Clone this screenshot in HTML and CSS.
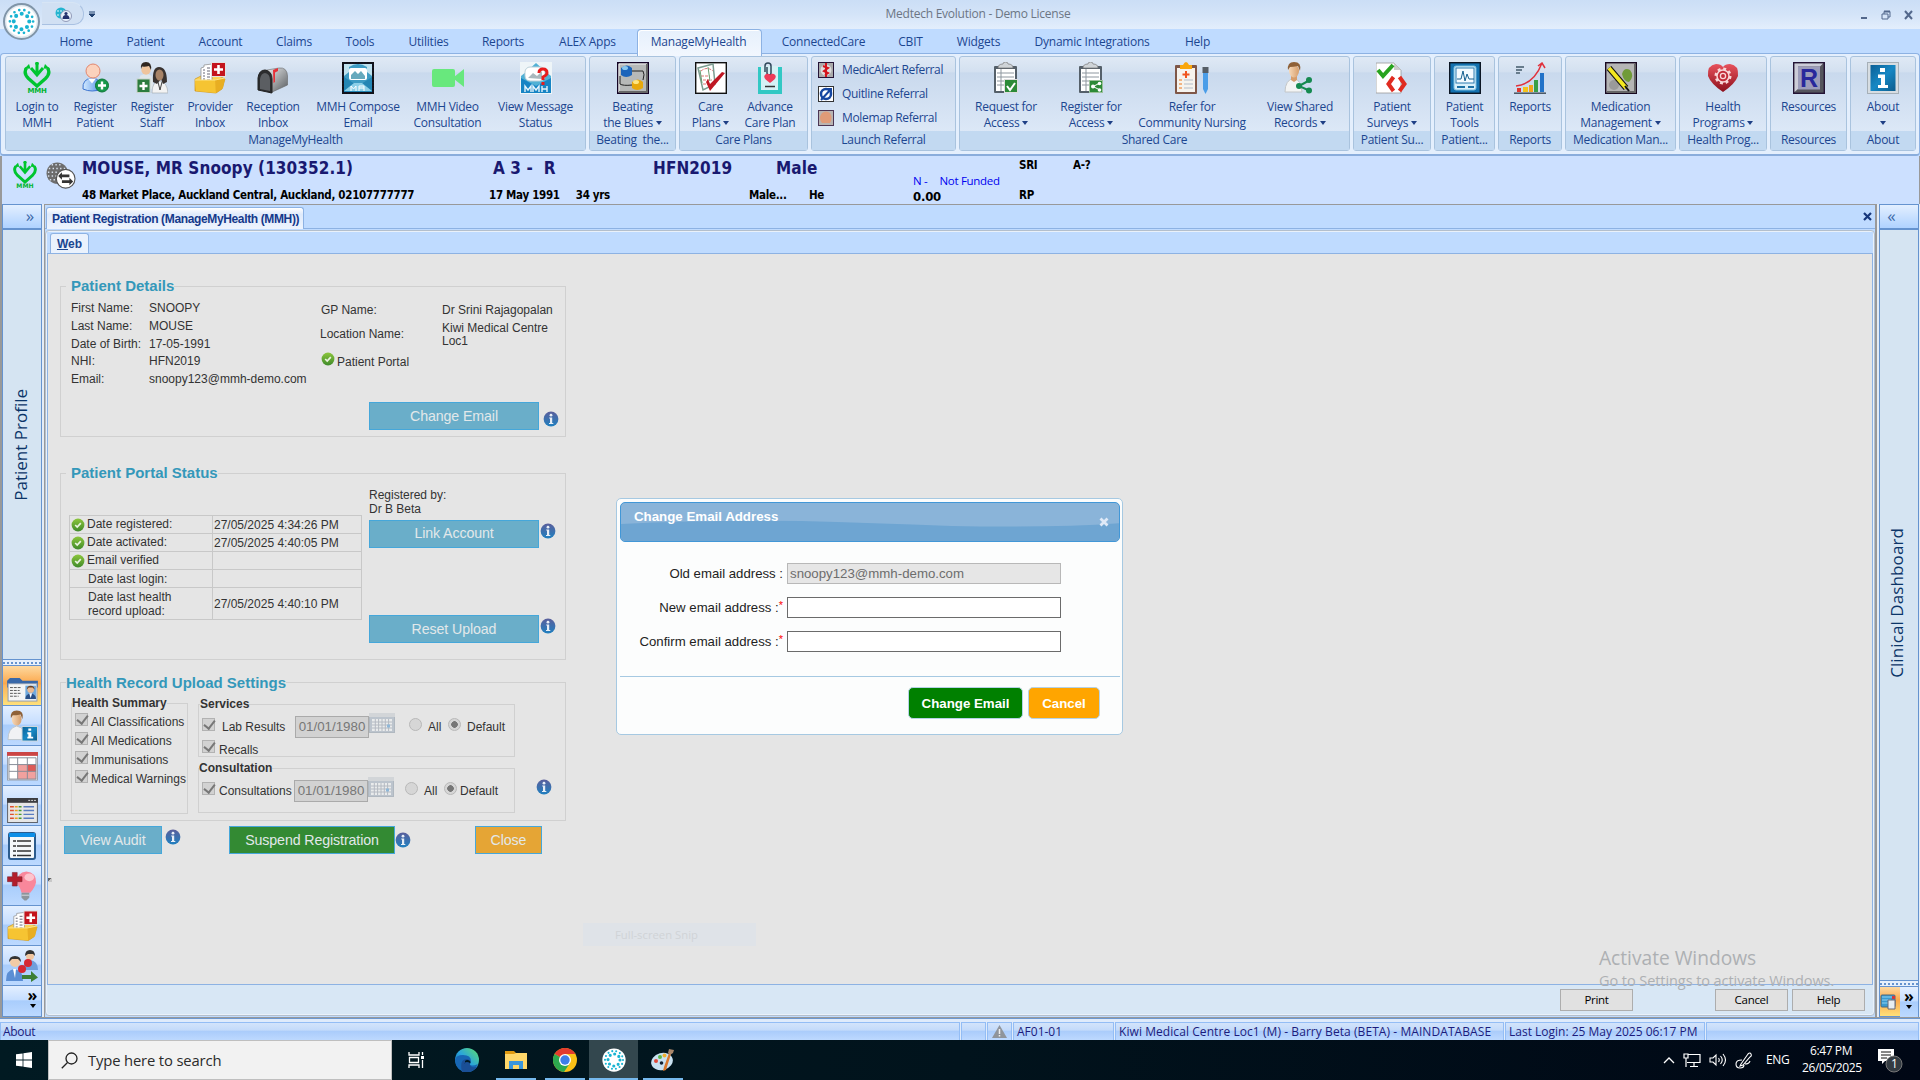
FILE: index.html
```html
<!DOCTYPE html>
<html lang="en">
<head>
<meta charset="utf-8">
<title>Medtech Evolution - Demo License</title>
<link rel="stylesheet" href="styles.css">
</head>
<body>
<svg class="defs" width="0" height="0">
  <defs>
    <linearGradient id="gInfo" x1="0" y1="0" x2="0" y2="1"><stop offset="0" stop-color="#5a5f9c"/><stop offset="1" stop-color="#2080c0"/></linearGradient>
    <linearGradient id="gOk" x1="0" y1="0" x2="0" y2="1"><stop offset="0" stop-color="#8cc63c"/><stop offset="1" stop-color="#3f8a2a"/></linearGradient>
    <linearGradient id="gSkin" x1="0" y1="0" x2="1" y2="0"><stop offset="0" stop-color="#f6d8b8"/><stop offset="1" stop-color="#d79f6c"/></linearGradient>
    <linearGradient id="gBox" x1="0" y1="0" x2="0" y2="1"><stop offset="0" stop-color="#ffd95c"/><stop offset="1" stop-color="#e9a91c"/></linearGradient>
    <linearGradient id="gHeart" x1="0" y1="0" x2="0" y2="1"><stop offset="0" stop-color="#e8525c"/><stop offset="1" stop-color="#8c0f1c"/></linearGradient>
    <linearGradient id="gBlue" x1="0" y1="0" x2="1" y2="1"><stop offset="0" stop-color="#0a5f96"/><stop offset=".5" stop-color="#1788c4"/><stop offset="1" stop-color="#0d5c8c"/></linearGradient>
    <linearGradient id="gUser" x1="0" y1="0" x2="1" y2="0"><stop offset="0" stop-color="#d3eaff"/><stop offset="1" stop-color="#4c8ce8"/></linearGradient>
    <linearGradient id="gMail" x1="0" y1="0" x2="1" y2="1"><stop offset="0" stop-color="#f4f5f6"/><stop offset="1" stop-color="#54585c"/></linearGradient>
    <linearGradient id="gEdge" x1="0" y1="1" x2="1" y2="0"><stop offset="0" stop-color="#0c59a4"/><stop offset=".5" stop-color="#2aa5dc"/><stop offset="1" stop-color="#5fe06c"/></linearGradient>
  </defs>
  <symbol id="info" viewBox="0 0 16 16"><circle cx="8" cy="8" r="7.4" fill="url(#gInfo)"/><circle cx="8" cy="4.2" r="1.4" fill="#e8eef6"/><path d="M6.2 6.5h3V12h1.1v1H6V12h1V7.5h-.8z" fill="#e8eef6"/></symbol>
  <symbol id="ok" viewBox="0 0 14 14"><circle cx="7" cy="7" r="6.4" fill="url(#gOk)"/><path d="M4.2 7l2 2 3.6-3.8" fill="none" stroke="#eaf4e0" stroke-width="1.7"/></symbol>
  <symbol id="mmh" viewBox="0 0 32 32"><path d="M5.500 6Q2 11 7.500 16.500L16 24L24.500 16.500Q30 11 26.500 6" fill="none" stroke="#00c52f" stroke-width="3.300"/><path d="M3 7l5-5 1.500 4.500zM29 7l-5-5-1.500 4.500z" fill="#00c52f"/><path d="M16 1V11M10 6l6 7 6-7" stroke="#00c52f" stroke-width="3" fill="none"/><circle cx="16" cy="1.500" r="1.800" fill="#00c52f"/></symbol>
  <symbol id="medtech" viewBox="0 0 32 32"><circle cx="16" cy="16" r="15.500" fill="#fff"/><g fill="none" stroke="#19b4d2" stroke-linecap="round"><circle cx="16" cy="16" r="12" stroke-width="2.800" stroke-dasharray="0 5.380"/><circle cx="16" cy="16" r="8" stroke-width="4.200" stroke-dasharray="0 6.280"/></g></symbol>
  <symbol id="patient-add" viewBox="0 0 32 32"><path d="M4 27Q3 17 13 16Q23 17 23 27Q13 31 4 27z" fill="url(#gUser)" stroke="#3b74d0"/><path d="M9 16.500l4 5 4-5z" fill="#fff"/><circle cx="14" cy="9" r="7" fill="#fbd2bd" stroke="#e2876e"/><circle cx="23" cy="23.500" r="6.500" fill="#17984a" stroke="#0c7635"/><path d="M23 19.500v8M19 23.500h8" stroke="#fff" stroke-width="2.400"/></symbol>
  <symbol id="staff-add" viewBox="0 0 32 32"><path d="M3 18q0-6 7-6 7 0 7 7v8H3z" fill="#dfe6ea"/><circle cx="10" cy="8" r="4.700" fill="#efc49c"/><path d="M5 7Q4 0 10 0q6 0 5 8l-2-4q-4 1-7 .5z" fill="#2f2620"/><path d="M16 31q0-12 8-12 7 1 8 12z" fill="#f3f3f3" stroke="#9ba5ad" stroke-width=".6"/><path d="M17 20q-1-15 6-15 8 0 8 15l-4 2-2-5-4 5z" fill="#3a3330"/><ellipse cx="23.500" cy="13" rx="4" ry="5.500" fill="#a88468"/><path d="M22 20l2 8 2-8" stroke="#444" fill="none"/><rect x="1" y="17" width="13" height="13.500" fill="#2c7c3e" stroke="#c9d4c9"/><path d="M7.500 20v8M3.500 24h8" stroke="#fff" stroke-width="2.400"/></symbol>
  <symbol id="inbox-red" viewBox="0 0 32 32"><path d="M1 17l6-3h18l6 3-3 10-6 4L1 29z" fill="url(#gBox)" stroke="#cf9414" stroke-width=".7"/><path d="M7 21V6l3-1V3l8-1v19z" fill="#fff" stroke="#888" stroke-width=".7"/><path d="M9 8h2M9 11h2M9 14h2M9 17h2M13 6h3M13 9h3M13 12h3M13 15h3M13 18h3" stroke="#667"/><path d="M1 18h20l1 13L2 29z" fill="#f6c432"/><path d="M21 18l10-2-2 10-7 5z" fill="#e8ae22"/><path d="M1 18h20l10-2" fill="none" stroke="#fbe38c"/><rect x="17.500" y=".5" width="14" height="14" fill="#c4141d" stroke="#e2e2e2"/><path d="M24.500 3v9M20 7.500h9" stroke="#fff" stroke-width="2.600"/></symbol>
  <symbol id="mailbox" viewBox="0 0 32 32"><path d="M7 8.500L22 6q8-1 8.500 8v9L13 31z" fill="url(#gMail)" stroke="#666" stroke-width=".6"/><path d="M1 28V16q1-8 7-8 7 1 7 9v14z" fill="#2b2c2e" stroke="#222"/><path d="M3 27V17q1-6 5-6 5 1 5 7v11z" fill="#5b5e62"/><path d="M16 8l5-2v3l-3 1.500V20l-1.500 1z" fill="#e83038"/></symbol>
  <symbol id="compose" viewBox="0 0 32 32"><rect width="32" height="32" fill="#111327"/><rect x="2" y="2" width="28" height="28" fill="#bfe2ee"/><path d="M2 14l5-4V5q9-6 18 0v5l5 4v10H2z" fill="#3e9cc4"/><rect x="7" y="6" width="18" height="12" rx="2" fill="#fff"/><path d="M9 13l4-4 3 3 3-3 4 5v3H9z" fill="#65a9bd"/><path d="M2 15l14 9 14-9v15H2z" fill="#2486b4"/><path d="M2 29l10-8h8l10 8z" fill="#8dd0e8"/><path d="M9 29v-5l2.500 3 2.500-3v5M17 29v-5h5v5M17 26h5" stroke="#fff" fill="none"/><rect x=".7" y=".7" width="30.600" height="30.600" fill="none" stroke="#111" stroke-width="1.500" stroke-dasharray="2 1"/></symbol>
  <symbol id="video" viewBox="0 0 32 32"><rect y="7" width="23" height="18" rx="2" fill="#68e87d"/><path d="M22 15l10-8v18l-10-8z" fill="#68e87d"/></symbol>
  <symbol id="message" viewBox="0 0 32 32"><rect width="32" height="32" fill="#eef5f8"/><path d="M1 14l5-4 10-9 10 9 5 4v17H1z" fill="#51b1d5"/><rect x="5" y="5" width="20" height="14" rx="5" fill="#fff" stroke="#b9cfd8"/><path d="M8 16l5-5 4 3 5-5v8z" fill="#a9b8bd"/><path d="M1 16l15 8 15-8v15H1z" fill="#1784c4"/><path d="M5 30v-6l3 4 3-4v6M13 30v-6l3 4 3-4v6M22 24v6M27 24v6M22 27h5" stroke="#e4f4fc" stroke-width="1.400" fill="none"/><path d="M19 11q0-4 4-4 4 0 4 4 0 2-4 4v3M23 20v3" stroke="#e81c1c" stroke-width="3" fill="none"/></symbol>
  <symbol id="beating" viewBox="0 0 32 32"><rect x=".7" y=".7" width="30.600" height="30.600" fill="#b7b9b8" stroke="#140425" stroke-width="1.400"/><path d="M2 30V2h28" stroke="#eee" fill="none"/><path d="M2 30h28V2" stroke="#666" fill="none" stroke-width="2"/><path d="M14 9h12q2 3 0 9M3 14v8q3 2 12 1" fill="none" stroke="#222"/><path d="M4 6q6-5 11 0v7q-6 4-11 0z" fill="#1c64ba"/><ellipse cx="8" cy="6" rx="3" ry="2" fill="#88c8f0"/><path d="M15 20q6-5 11 0v6q-6 4-11 0z" fill="#e8a80c"/><ellipse cx="19" cy="20" rx="3" ry="2" fill="#ffe680"/></symbol>
  <symbol id="care" viewBox="0 0 32 32"><rect x=".7" y=".7" width="30.600" height="30.600" fill="#fff" stroke="#111" stroke-width="1.400"/><path d="M3 6l15-4 2 20-12 6z" fill="#fff" stroke="#7b9c90" stroke-width="1.500"/><path d="M6 9q6-5 12 0M6 14h9M8 18h9M8 22h6" stroke="#d77" fill="none" stroke-dasharray="3 1"/><path d="M5 8l2 13M13 5l2 14" stroke="#6a9e72"/><path d="M11 20l4 9 15-18-3-1-12 12-2-5z" fill="#bf1622"/></symbol>
  <symbol id="advance" viewBox="0 0 32 32"><path d="M4 5h24v27H4z" fill="#32c8c4"/><path d="M7 4h17v24H7z" fill="#d5f1f5"/><path d="M11 10V4q0-3 3-3t3 3v7q0 2-2 2t-2-2V5" fill="none" stroke="#30495b" stroke-width="1.500"/><path d="M16 21q-9-6-4-9 3-1 4 1 1-2 4-1 5 3-4 9z" fill="#ee3b58"/><path d="M11 24.500h10" stroke="#333" stroke-width="1.500"/></symbol>
  <symbol id="medicalert" viewBox="0 0 16 16"><rect x=".5" y=".5" width="15" height="15" fill="#aaa" stroke="#241436"/><circle cx="8" cy="8" r="5.500" fill="#ddd"/><path d="M8 1v14M5 4l5 2-4 3 4 2-3 2" stroke="#d4141c" stroke-width="2" fill="none"/></symbol>
  <symbol id="quitline" viewBox="0 0 16 16"><rect x=".5" y=".5" width="15" height="15" fill="#fff" stroke="#333"/><circle cx="8" cy="8" r="5" fill="none" stroke="#1546a0" stroke-width="2.500"/><path d="M3 14L13 3M7 3h6v5" stroke="#1546a0" stroke-width="2" fill="none"/></symbol>
  <symbol id="molemap" viewBox="0 0 16 16"><rect x=".5" y=".5" width="15" height="15" fill="#b9b4b2" stroke="#4c3554"/><path d="M4 3q4-3 8 0 3 5 0 10H4Q0 8 4 3z" fill="#e09b78"/></symbol>
  <symbol id="clip" viewBox="0 0 32 32"><rect x="4" y="4" width="23" height="27" rx="1" fill="#55606a"/><rect x="6" y="7" width="19" height="22" fill="#fff"/><path d="M7 11h17M7 15h17M7 19h17M7 23h17M11 7v22" stroke="#8e979f"/><path d="M8 6q0-4 5-4 0-2 2.500-2T18 2q5 0 5 4z" fill="#cfd4d8" stroke="#777" stroke-width=".7"/></symbol>
  <symbol id="request" viewBox="0 0 32 32"><use href="#clip"/><rect x="14.500" y="17.500" width="13" height="13" fill="#2c8a37" stroke="#ddd"/><path d="M17 24l3 4 5-7" stroke="#fff" stroke-width="2" fill="none"/></symbol>
  <symbol id="share-access" viewBox="0 0 32 32"><use href="#clip"/><rect x="14.500" y="18.500" width="13" height="12" fill="#2c8a37" stroke="#9bc09b"/><path d="M25 21l-7 3.500 7 3.500" stroke="#fff" fill="none"/><circle cx="18" cy="24.500" r="2" fill="#fff"/><circle cx="24.500" cy="21.500" r="1.800" fill="#fff"/><circle cx="24.500" cy="28" r="1.800" fill="#fff"/></symbol>
  <symbol id="nursing" viewBox="0 0 36 32"><rect x="1" y="3" width="22" height="29" rx="1" fill="#7f5748"/><rect x="3" y="6" width="18" height="24" fill="#f6f3ee"/><path d="M6 7V3h3q3-6 6 0h3v4z" fill="#f9a60c"/><path d="M12 9v7M8.500 12.500h7" stroke="#f0541e" stroke-width="2"/><path d="M5 18h3M5 22h3M5 26h3" stroke="#f0a060" stroke-width="1.500"/><path d="M10 18h9M10 22h9M10 26h9" stroke="#c9d0d6" stroke-width="1.500"/><path d="M29 6h5v21l-2.500 5-2.500-5z" fill="#4a9de8"/><path d="M28.500 5h6v6h-6z" fill="#555d66"/></symbol>
  <symbol id="shared" viewBox="0 0 32 32"><path d="M1 30q0-12 9-14 7 2 8 14z" fill="#f3f4f4" stroke="#c3c6c8"/><path d="M7 13h6v5l-3 2-3-2z" fill="#d69d6b"/><ellipse cx="10" cy="9" rx="5" ry="6.500" fill="url(#gSkin)"/><path d="M4 8Q3 0 10 0q8 0 6 9l-2-5q-5 1-8 1z" fill="#8f6138"/><path d="M26 18l-11 6 11 5" fill="none" stroke="#158a50" stroke-width="2"/><circle cx="15" cy="24" r="3" fill="#158a50"/><circle cx="25" cy="18" r="3" fill="#158a50"/><circle cx="25" cy="28.500" r="3" fill="#158a50"/></symbol>
  <symbol id="surveys" viewBox="0 0 32 32"><path d="M0 1h18l7 7v23H0z" fill="#fff" stroke="#999" stroke-width=".8"/><path d="M18 1v7h7z" fill="#ccc"/><path d="M2 8l5 6L17 3" fill="none" stroke="#27a31f" stroke-width="4"/><path d="M17.500 15l-5 7 5 7M23.500 15l5 7-5 7" fill="none" stroke="#e02b20" stroke-width="4"/></symbol>
  <symbol id="tools" viewBox="0 0 32 32"><rect x=".7" y=".7" width="30.600" height="30.600" fill="#1472b0" stroke="#0c1624" stroke-width="1.400"/><rect x="5" y="4" width="22" height="24" rx="2" fill="#d9f0fa" stroke="#76bce0"/><rect x="7" y="6" width="18" height="15" fill="#f4fbff" stroke="#2a7ab0"/><path d="M8 17h4l2-8 2 10 2-7 2 5h5" stroke="#15608f" fill="none"/><path d="M8 25h8M19 25h6" stroke="#1c70a4" stroke-width="2"/></symbol>
  <symbol id="chart" viewBox="0 0 32 32"><path d="M2 5h8M2 8h6M2 11h4" stroke="#677c8c" stroke-width="2"/><path d="M0 31.200h32" stroke="#45525e" stroke-width="1.500"/><rect x="3" y="26" width="4" height="4" fill="#e0362e"/><rect x="9" y="25" width="5" height="5" fill="#f3c41d"/><rect x="15" y="23" width="4" height="7" fill="#f3a41d"/><rect x="20" y="18" width="4" height="12" fill="#38a048"/><rect x="26" y="11" width="4" height="19" fill="#2272c8"/><path d="M2 24Q20 22 28 1M24 4l4-3 3 5" fill="none" stroke="#e0313c" stroke-width="1.500"/></symbol>
  <symbol id="medication" viewBox="0 0 32 32"><rect x=".7" y=".7" width="30.600" height="30.600" fill="#b5b5b5" stroke="#180920" stroke-width="1.400"/><path d="M30 2v28H2" fill="none" stroke="#666" stroke-width="2"/><path d="M17 12q2-7 8-4 5 6-1 12-5 0-7-8z" fill="#709b38"/><circle cx="9" cy="23" r="5" fill="#9a9a9a"/><path d="M4 6l17 20" stroke="#111" stroke-width="6"/><path d="M4 6l17 20" stroke="#f4e820" stroke-width="4"/><path d="M20 24l4 5" stroke="#111" stroke-width="2"/></symbol>
  <symbol id="heart" viewBox="0 0 32 32"><path d="M16 30Q4 22 1 14 0 3 9 2q5 0 7 3 2-3 7-3 9 1 8 12-3 8-15 16z" fill="url(#gHeart)"/><circle cx="16" cy="14" r="7" fill="none" stroke="#f8d7d8" stroke-width="3" stroke-dasharray="2.800 2.698"/><circle cx="16" cy="14" r="6" fill="#c22c38" stroke="#f8d7d8" stroke-width="1.500"/><circle cx="16" cy="14" r="2.600" fill="none" stroke="#f8d7d8" stroke-width="1.300"/></symbol>
  <symbol id="resources" viewBox="0 0 32 32"><rect x=".7" y=".7" width="30.600" height="30.600" fill="#55555d" stroke="#241436" stroke-width="1.400"/><path d="M1.500 30V1.500H30l-3 3H5V27z" fill="#ccccd8"/><rect x="5" y="4.500" width="22" height="23" fill="#9c9cba"/></symbol>
  <symbol id="about" viewBox="0 0 32 32"><rect x=".5" y=".5" width="31" height="31" fill="#d7dde2" stroke="#a6b0b8"/><rect x="3.500" y="3" width="25" height="26" fill="url(#gBlue)"/><path d="M13 6h5v4h-5zM11 12.500h7V23h3v3H11v-3h3v-7h-3z" fill="#fff"/></symbol>
  <symbol id="globe" viewBox="0 0 32 30"><circle cx="12" cy="13" r="11.500" fill="#6d6d6d"/><g fill="none" stroke="#d8e0ec" stroke-width="1.600" stroke-dasharray="1.500 2.500"><path d="M6 4h12M3 8h18M2 12h20M2 16h20M4 20h14"/></g><circle cx="21" cy="19" r="10" fill="#fff" stroke="#555" stroke-width="1.200"/><path d="M13 16l4-4v2.500h8v3h-8V20zM29 22l-4-4v2.500h-8v3h8V26z" fill="#333"/></symbol>
  <symbol id="folder-id" viewBox="0 0 32 26"><path d="M0 4l3-3h10l3 3h16v7H0z" fill="#3867a8"/><rect x="1" y="7" width="30" height="18" fill="#f5f5f5" stroke="#8c9bb0"/><path d="M3 11h12M3 14h10M3 17h12M3 20h9" stroke="#555" stroke-dasharray="3 1"/><rect x="19" y="9" width="11" height="14" fill="#6fa8dc"/><path d="M19 23q0-5 5.500-6 5.500 1 5.500 6z" fill="#294f86"/><path d="M23 17h3l-1.500 5z" fill="#fff"/><circle cx="24.500" cy="13" r="3.500" fill="#eab991"/><path d="M20.500 13q0-4 4-4t4 4l-2-2h-4z" fill="#6a4326"/></symbol>
  <symbol id="person-info" viewBox="0 0 32 32"><path d="M1 30q0-12 9-14 9 2 10 14z" fill="#f1f2f4" stroke="#bfc5ca"/><ellipse cx="10" cy="9" rx="5" ry="6.500" fill="url(#gSkin)"/><path d="M4 8Q3 0 10 0q8 0 6 9l-2-5q-5 1-8 1z" fill="#8f6138"/><rect x="15.500" y="16.500" width="16" height="15" fill="url(#gBlue)" stroke="#cfd8de"/><path d="M22 18.500h3v2.500h-3zM21 22.500h4V27h2v2h-6v-2h1v-2.500h-1z" fill="#fff"/></symbol>
  <symbol id="calendar" viewBox="0 0 32 30"><rect x=".5" y="1" width="31" height="28" fill="#fff" stroke="#98a0ae"/><path d="M0 0h32v4H0z" fill="#cb4545"/><path d="M11 13h19v15H11z" fill="#f1a19e"/><path d="M21 13h9v7h-9z" fill="#dc5a56"/><path d="M2 6h28v22H2zM11 6v22M21 6v22M2 13h28M2 20h28" fill="none" stroke="#858b96"/></symbol>
  <symbol id="table-dark" viewBox="0 0 32 26"><rect x=".5" y=".5" width="31" height="25" fill="#e6e6e6" stroke="#5b5f66"/><path d="M0 0h32v5H0z" fill="#3b3c40"/><path d="M22 2.500h8" stroke="#ddd" stroke-dasharray="2 1"/><path d="M3 9h4M3 13h4M3 17h4M3 21h4" stroke="#e05030" stroke-width="1.500"/><path d="M8 9h3M8 13h3M8 17h3M8 21h3" stroke="#e8a020" stroke-width="1.500"/><path d="M12 9h3M12 13h3M12 17h3M12 21h3" stroke="#4a9a30" stroke-width="1.500"/><path d="M17 9h11M17 13h11M17 17h11M17 21h11" stroke="#5a7cc0" stroke-width="1.500"/></symbol>
  <symbol id="list" viewBox="0 0 28 28"><rect x="1" y="1" width="26" height="26" rx="2" fill="#f5f8fa" stroke="#2b5b8d" stroke-width="2"/><path d="M1 1h26v4H1z" fill="#0d8fe8"/><path d="M5 9h3M5 14h3M5 19h3M5 23.500h3M9 9h14M9 14h14M9 19h14M9 23.500h14" stroke="#333" stroke-width="1.600"/></symbol>
  <symbol id="bulb" viewBox="0 0 32 32"><path d="M15 23q-1-5-5-10 0-11 10-12 10 1 10 11-1 5-6 11z" fill="#f9879b"/><ellipse cx="23" cy="7" rx="5" ry="4" fill="#fdc4cd"/><path d="M15 23h8v5l-3 3h-2l-3-3z" fill="#8d959c"/><path d="M15 25.500h8" stroke="#d5dade"/><path d="M5.500 2h5v4.500h5v5h-5V16h-5v-4.500H.5v-5h5z" fill="#b21d2c" stroke="#7b2430" stroke-width=".6"/></symbol>
  <symbol id="swap-people" viewBox="0 0 34 32"><path d="M18 20q0-9 7-10 8 1 8 10z" fill="#6f9fdc"/><circle cx="25" cy="6" r="4" fill="#f0c6a0"/><path d="M20 6q0-6 5-6t5 6l-2-2h-5z" fill="#333"/><path d="M1 31Q1 20 9 19q9 1 9 12z" fill="#5b8ed4"/><path d="M8 19h3l-1 9z" fill="#fff"/><circle cx="10" cy="12" r="5" fill="#f3cba6"/><path d="M4 12q0-6 6-6t6 6l-3-3H7z" fill="#333"/><circle cx="23" cy="13" r="4" fill="#d62832"/><circle cx="17" cy="19" r="4" fill="#d62832"/><path d="M17 25h9v-4l7 6.500-7 4.500v-3h-9z" fill="#3d7f35"/></symbol>
  <symbol id="dash" viewBox="0 0 18 18"><rect x="1" y="2" width="14" height="12" rx="1" fill="#3a9ad0" stroke="#4a6880"/><path d="M2 4h10M2 7h9M2 10h7" stroke="#8fd0f0"/><path d="M8 7h7v9H8z" fill="#e8eef2" stroke="#667"/><rect x="12" y="3" width="3" height="3" fill="#d83838"/></symbol>
  <symbol id="cal-small" viewBox="0 0 26 20"><rect x=".5" y="1" width="25" height="18.500" fill="#bcc4cd" stroke="#b0b8c0"/><path d="M0 0h26v4H0z" fill="#d2d5d8"/><path d="M3 6h20v12H3z" fill="#e9ebec"/><path d="M3 9h20M3 12h20M3 15h20M6.300 6v12M9.600 6v12M13 6v12M16.300 6v12M19.600 6v12" stroke="#b4bac2"/><rect x="18" y="11.500" width="3" height="3" fill="#8fb7d8"/></symbol>
</svg>

<header class="titlebar">
  <div class="quick"><svg width="17" height="15" viewBox="0 0 17 15"><circle cx="6" cy="6" r="5.500" fill="#24b4d0"/><path d="M2 4h8M2 8h8" stroke="#e0f6fa" stroke-dasharray="2 1"/><circle cx="11" cy="9" r="5.500" fill="#e8f0fa" stroke="#7d86a8" stroke-width=".8"/><path d="M7.500 12q0-4 3.500-4t3.500 4z" fill="#23306c"/><circle cx="11" cy="6.500" r="1.600" fill="#23306c"/></svg></div>
  <svg class="quick-arrow" width="6" height="7" viewBox="0 0 6 7"><path d="M0 1h6M0 3l3 3 3-3z" stroke="#20406e" fill="#20406e"/></svg>
  <div class="window-title">Medtech Evolution - Demo License</div>
  <div class="window-buttons">
    <svg width="8" height="10" viewBox="0 0 8 10"><path d="M1 8h6" stroke="#53688c" stroke-width="2"/></svg>
    <svg width="10" height="10" viewBox="0 0 10 10"><path d="M1 4h6v5H1zM3 4V1.500h6V7H7" fill="none" stroke="#53688c"/><path d="M3 1.500h6" stroke="#53688c" stroke-width="2"/></svg>
    <svg width="9" height="10" viewBox="0 0 9 10"><path d="M1 1l7 8M8 1L1 9" stroke="#53688c" stroke-width="2"/></svg>
  </div>
  <div class="orb"><svg width="32" height="32"><use href="#medtech"/></svg></div>
</header>

<nav class="tabs">
  <span>Home</span><span>Patient</span><span>Account</span><span>Claims</span><span>Tools</span><span>Utilities</span><span>Reports</span><span class="alex">ALEX Apps</span><span class="active">ManageMyHealth</span><span>ConnectedCare</span><span>CBIT</span><span>Widgets</span><span>Dynamic Integrations</span><span>Help</span>
</nav>

<section class="ribbon">
  <div class="group">
    <div class="tools tools-mmh">
      <div class="tool"><svg viewBox="0 0 32 32"><use href="#mmh"/><text x="16" y="31" text-anchor="middle" class="mmh-text">MMH</text></svg><p>Login to<br>MMH</p></div>
      <div class="tool"><svg><use href="#patient-add"/></svg><p>Register<br>Patient</p></div>
      <div class="tool"><svg><use href="#staff-add"/></svg><p>Register<br>Staff</p></div>
      <div class="tool"><svg><use href="#inbox-red"/></svg><p>Provider<br>Inbox</p></div>
      <div class="tool"><svg><use href="#mailbox"/></svg><p>Reception<br>Inbox</p></div>
      <div class="tool"><svg><use href="#compose"/></svg><p>MMH Compose<br>Email</p></div>
      <div class="tool"><svg><use href="#video"/></svg><p>MMH Video<br>Consultation</p></div>
      <div class="tool"><svg><use href="#message"/></svg><p>View Message<br>Status</p></div>
    </div>
    <div class="caption">ManageMyHealth</div>
  </div>
  <div class="group">
    <div class="tools"><div class="tool"><svg><use href="#beating"/></svg><p>Beating<br>the Blues <i></i></p></div></div>
    <div class="caption">Beating&nbsp; the...</div>
  </div>
  <div class="group">
    <div class="tools tools-care">
      <div class="tool"><svg><use href="#care"/></svg><p>Care<br>Plans <i></i></p></div>
      <div class="tool"><svg><use href="#advance"/></svg><p>Advance<br>Care Plan</p></div>
    </div>
    <div class="caption">Care Plans</div>
  </div>
  <div class="group">
    <div class="links">
      <div><svg><use href="#medicalert"/></svg>MedicAlert Referral</div>
      <div><svg><use href="#quitline"/></svg>Quitline Referral</div>
      <div><svg><use href="#molemap"/></svg>Molemap Referral</div>
    </div>
    <div class="caption">Launch Referral</div>
  </div>
  <div class="group">
    <div class="tools tools-shared">
      <div class="tool"><svg><use href="#request"/></svg><p>Request for<br>Access <i></i></p></div>
      <div class="tool"><svg><use href="#share-access"/></svg><p>Register for<br>Access <i></i></p></div>
      <div class="tool"><svg class="wide"><use href="#nursing"/></svg><p>Refer for<br>Community Nursing</p></div>
      <div class="tool"><svg><use href="#shared"/></svg><p>View Shared<br>Records <i></i></p></div>
    </div>
    <div class="caption">Shared Care</div>
  </div>
  <div class="group"><div class="tools"><div class="tool"><svg><use href="#surveys"/></svg><p>Patient<br>Surveys <i></i></p></div></div><div class="caption">Patient Su...</div></div>
  <div class="group"><div class="tools"><div class="tool"><svg><use href="#tools"/></svg><p>Patient<br>Tools</p></div></div><div class="caption">Patient...</div></div>
  <div class="group"><div class="tools"><div class="tool"><svg><use href="#chart"/></svg><p>Reports</p></div></div><div class="caption">Reports</div></div>
  <div class="group"><div class="tools"><div class="tool"><svg><use href="#medication"/></svg><p>Medication<br>Management <i></i></p></div></div><div class="caption">Medication Man...</div></div>
  <div class="group"><div class="tools"><div class="tool"><svg><use href="#heart"/></svg><p>Health<br>Programs <i></i></p></div></div><div class="caption">Health Prog...</div></div>
  <div class="group"><div class="tools"><div class="tool"><svg viewBox="0 0 32 32"><use href="#resources"/><text x="16" y="25" text-anchor="middle" class="r-text">R</text></svg><p>Resources</p></div></div><div class="caption">Resources</div></div>
  <div class="group"><div class="tools"><div class="tool"><svg><use href="#about"/></svg><p>About<br><i></i></p></div></div><div class="caption">About</div></div>
</section>

<section class="banner">
  <svg class="banner-mmh" viewBox="0 0 32 32"><use href="#mmh"/><text x="16" y="31" text-anchor="middle" class="mmh-text">MMH</text></svg>
  <svg class="banner-globe"><use href="#globe"/></svg>
  <div class="b-name"><strong>MOUSE, MR Snoopy (130352.1)</strong><b>48 Market Place, Auckland Central, Auckland, 02107777777</b></div>
  <div class="b-code"><strong>A 3 - &nbsp;R</strong><b>17 May 1991<span>34 yrs</span></b></div>
  <div class="b-nhi"><strong>HFN2019</strong><b>Male...</b></div>
  <div class="b-sex"><strong>Male</strong><b>He</b></div>
  <div class="b-fund"><em>N -<span>Not Funded</span></em><b>0.00</b></div>
  <div class="b-sri"><b>SRI</b><b>RP</b></div>
  <div class="b-alert"><b>A-?</b></div>
</section>

<main class="workspace">
  <aside class="dock dock-left">
    <div class="dock-head">»</div>
    <div class="dock-body"><span>Patient Profile</span></div>
    <div class="grip"></div>
    <div class="dock-item selected"><svg width="31" height="25"><use href="#folder-id"/></svg></div>
    <div class="dock-item"><svg width="31" height="32"><use href="#person-info"/></svg></div>
    <div class="dock-item"><svg width="31" height="29"><use href="#calendar"/></svg></div>
    <div class="dock-item low"><svg width="31" height="25"><use href="#table-dark"/></svg></div>
    <div class="dock-item"><svg width="28" height="28"><use href="#list"/></svg></div>
    <div class="dock-item"><svg width="31" height="32"><use href="#bulb"/></svg></div>
    <div class="dock-item"><svg width="31" height="32"><use href="#inbox-red"/></svg></div>
    <div class="dock-item"><svg width="34" height="32"><use href="#swap-people"/></svg></div>
    <div class="dock-more"><span>»</span><i></i></div>
  </aside>

  <section class="document">
    <div class="doc-tabs"><div class="doc-tab">Patient Registration (ManageMyHealth (MMH))</div><svg class="doc-close" width="9" height="9" viewBox="0 0 9 9"><path d="M1 1l7 7M8 1L1 8" stroke="#17377c" stroke-width="2.200"/></svg></div>
    <div class="frame">
      <div class="sub-tabs"><div class="sub-tab"><u>W</u>eb</div></div>
      <div class="content">
        <fieldset class="box details">
          <legend>Patient Details</legend>
          <div class="details-top">
            <dl class="person">
              <dt>First Name:</dt><dd>SNOOPY</dd>
              <dt>Last Name:</dt><dd>MOUSE</dd>
              <dt>Date of Birth:</dt><dd>17-05-1991</dd>
              <dt>NHI:</dt><dd>HFN2019</dd>
              <dt>Email:</dt><dd>snoopy123@mmh-demo.com</dd>
            </dl>
            <dl class="clinic">
              <dt>GP Name:</dt><dd>Dr Srini Rajagopalan</dd>
              <dt class="loc">Location Name:</dt><dd class="loc-value">Kiwi Medical Centre Loc1</dd>
              <dt class="portal"><svg class="ok"><use href="#ok"/></svg>Patient Portal</dt>
            </dl>
          </div>
          <div class="details-action"><button class="btn blue">Change Email</button><svg class="info"><use href="#info"/></svg></div>
        </fieldset>

        <fieldset class="box status">
          <legend>Patient Portal Status</legend>
          <div class="status-row">
            <table>
              <tr><td><svg class="ok"><use href="#ok"/></svg>Date registered:</td><td>27/05/2025 4:34:26 PM</td></tr>
              <tr><td><svg class="ok"><use href="#ok"/></svg>Date activated:</td><td>27/05/2025 4:40:05 PM</td></tr>
              <tr><td><svg class="ok"><use href="#ok"/></svg>Email verified</td><td></td></tr>
              <tr><td class="plain">Date last login:</td><td></td></tr>
              <tr class="tall"><td class="plain">Date last health<br>record upload:</td><td>27/05/2025 4:40:10 PM</td></tr>
            </table>
            <div class="status-side">
              <p>Registered by:<br>Dr B Beta</p>
              <div class="side-action link"><button class="btn blue">Link Account</button><svg class="info"><use href="#info"/></svg></div>
              <div class="side-action reset"><button class="btn blue">Reset Upload</button><svg class="info"><use href="#info"/></svg></div>
            </div>
          </div>
        </fieldset>

        <fieldset class="box upload">
          <legend>Health Record Upload Settings</legend>
          <div class="upload-row">
            <fieldset class="inner summary">
              <legend>Health Summary</legend>
              <label><i class="check"></i>All Classifications</label>
              <label><i class="check"></i>All Medications</label>
              <label><i class="check"></i>Immunisations</label>
              <label><i class="check"></i>Medical Warnings</label>
            </fieldset>
            <div class="upload-mid">
              <fieldset class="inner services">
                <legend>Services</legend>
                <div class="opt lab"><i class="check"></i><span class="opt-name">Lab Results</span><span class="date">01/01/1980</span><svg class="cal"><use href="#cal-small"/></svg><i class="radio"></i><span class="opt-all">All</span><i class="radio on"></i><span class="opt-default">Default</span></div>
                <div class="opt recalls"><i class="check"></i><span class="opt-name">Recalls</span></div>
              </fieldset>
              <fieldset class="inner consult">
                <legend>Consultation</legend>
                <div class="opt"><i class="check"></i><span class="opt-name">Consultations</span><span class="date">01/01/1980</span><svg class="cal"><use href="#cal-small"/></svg><i class="radio"></i><span class="opt-all">All</span><i class="radio on"></i><span class="opt-default">Default</span></div>
              </fieldset>
            </div>
            <svg class="info"><use href="#info"/></svg>
          </div>
        </fieldset>

        <div class="actions">
          <button class="btn blue audit">View Audit</button><svg class="info"><use href="#info"/></svg>
          <button class="btn green suspend">Suspend Registration</button><svg class="info low"><use href="#info"/></svg>
          <button class="btn orange close">Close</button>
        </div>
        <i class="mark"></i>
        <div class="snip">Full-screen Snip</div>
      </div>
      <footer class="doc-footer"><button>Print</button><button class="cancel">Cancel</button><button>Help</button></footer>
    </div>
  </section>

  <aside class="dock dock-right">
    <div class="dock-head">«</div>
    <div class="dock-body"><span>Clinical Dashboard</span></div>
    <div class="grip"></div>
    <div class="dock-bottom"><div class="dock-mini"><svg width="18" height="18"><use href="#dash"/></svg></div><div class="dock-more"><span>»</span><i></i></div></div>
  </aside>
</main>

<section class="dialog">
  <header><svg class="wave" viewBox="0 0 498 38" preserveAspectRatio="none"><path d="M0 21Q80 17 180 18 250 20 330 23 430 25 499 20V38H0z"/></svg><h2>Change Email Address</h2><svg class="dialog-close" width="10" height="10" viewBox="0 0 10 10"><path d="M1.500 1.500l7 7M8.500 1.500l-7 7" stroke="#dfe9f7" stroke-width="2.800"/></svg></header>
  <div class="form">
    <span>Old email address :</span><div class="field disabled">snoopy123@mmh-demo.com</div>
    <span>New email address :<sup>*</sup></span><div class="field"></div>
    <span>Confirm email address :<sup>*</sup></span><div class="field"></div>
  </div>
  <footer><button class="ok-btn">Change Email</button><button class="cancel-btn">Cancel</button></footer>
</section>

<div class="watermark"><p>Activate Windows</p><small>Go to Settings to activate Windows.</small></div>

<section class="statusbar">
  <div>About</div><div></div><div class="warn"><svg width="15" height="13" viewBox="0 0 15 13"><path d="M7.500 0L15 13H0z" fill="#8f949b"/><path d="M7.500 4v5M7.500 10v1.500" stroke="#eee" stroke-width="1.500"/></svg></div><div>AF01-01</div><div class="site">Kiwi Medical Centre Loc1 (M) - Barry Beta (BETA) - MAINDATABASE</div><div>Last Login: 25 May 2025 06:17 PM</div><div></div>
</section>

<footer class="taskbar">
  <div class="start"><svg width="16" height="16" viewBox="0 0 16 16"><path d="M0 2.300L6.600 1.400V7.600H0zM7.400 1.300L16 0v7.600H7.400zM0 8.400h6.600v6.200L0 13.700zM7.400 8.400H16V16l-8.600-1.300z" fill="#fff"/></svg></div>
  <div class="search"><svg width="17" height="17" viewBox="0 0 17 17"><circle cx="10.500" cy="6.500" r="5.500" fill="none" stroke="#222" stroke-width="1.300"/><path d="M6.500 10.500L.8 16.200" stroke="#222" stroke-width="1.300"/></svg>Type here to search</div>
  <div class="app view"><svg width="17" height="16" viewBox="0 0 17 16"><path d="M1 0v3h10V0M1 16v-3h10v3M1.500 5.500h9v5h-9zM14.500 0v3M14.500 8v8" fill="none" stroke="#fff" stroke-width="1.300"/><path d="M13 4h3v3h-3z" fill="#fff"/></svg></div>
  <div class="app"><svg width="24" height="24" viewBox="0 0 24 24"><circle cx="12" cy="12" r="12" fill="url(#gEdge)"/><path d="M0 12Q1 7 8 7q8 0 8 6 0 2-2 3 2 3 9 0-4 8-11 8Q1 23 0 12z" fill="#1766b4"/><path d="M7 24q-3-13 5-13 4 1 3 4-1 2 2 4 3 1 6-1-6 8-16 6z" fill="#1a4f96"/><path d="M10 13q2-2 5 0 1 1 0 3 0-2-3-2t-2 2z" fill="#011a22"/></svg></div>
  <div class="app open"><svg width="22" height="20" viewBox="0 0 22 20"><path d="M0 1h9l2 2h11v16H0z" fill="#e09a10"/><path d="M0 4h9l2-1h11v16H0z" fill="#ffd769"/><path d="M4 19v-8h14v8h-4v-4H8v4z" fill="#3b96dc"/></svg></div>
  <div class="app open"><svg width="24" height="24" viewBox="0 0 24 24"><circle cx="12" cy="12" r="12" fill="#fbc116"/><path d="M12 12L1.600 6A12 12 0 0 1 22.400 6H12z" fill="#e33b2e"/><path d="M12 12L1.600 6A12 12 0 0 0 11 24l6-9z" fill="#2da94f"/><circle cx="12" cy="12" r="6" fill="#fff"/><circle cx="12" cy="12" r="4.700" fill="#3f7ee8"/></svg></div>
  <div class="app open current"><svg width="24" height="24"><use href="#medtech"/></svg></div>
  <div class="app open"><svg width="24" height="24" viewBox="0 0 24 24"><ellipse cx="11" cy="13.500" rx="11" ry="8.500" transform="rotate(-15 11 13.500)" fill="#c9e2f2"/><circle cx="5" cy="13" r="2" fill="#e04a3a"/><circle cx="9" cy="9" r="2" fill="#5cb848"/><circle cx="13.500" cy="7.500" r="2" fill="#f0b030"/><circle cx="10.500" cy="15" r="1.800" fill="#123"/><path d="M18 5l2 1-5 16-3 1 1-4z" fill="#d9782c"/><path d="M18 1l5 1-1 3-3 2-2-2z" fill="#a9876b"/></svg></div>
  <div class="tray">
    <svg width="12" height="8" viewBox="0 0 12 8"><path d="M1 7l5-5 5 5" fill="none" stroke="#fff" stroke-width="1.300"/></svg>
    <svg width="18" height="15" viewBox="0 0 18 15"><path d="M5 1.500h12v8H4M11 9.500v4M7 13.500h8M1 1h4v4H1zM3 5v9" fill="none" stroke="#fff" stroke-width="1.200"/></svg>
    <svg width="18" height="14" viewBox="0 0 18 14"><path d="M1 5h3l3-3v10L4 9H1zM9.500 5q1.500 2 0 4M11.500 3q3.500 4 0 8M14 1q5 6 0 12" fill="none" stroke="#fff" stroke-width="1.100"/></svg>
    <svg width="18" height="17" viewBox="0 0 18 17"><path d="M6 12L13 2q2-2 3 0t-1 3L8 13l-3 1zM7 8q-6 0-6 4t4 4 4-3M10 12q4 0 5-3" fill="none" stroke="#fff" stroke-width="1.100"/></svg>
    <span class="lang">ENG</span>
    <div class="clock"><span>6:47 PM</span><span>26/05/2025</span></div>
    <div class="notice"><svg width="25" height="25" viewBox="0 0 25 25"><path d="M0 1h16v12H7l-3 3v-3H0z" fill="#fff"/><path d="M3 4h10M3 7h10M3 10h6" stroke="#111"/><circle cx="16" cy="16" r="8" fill="#333b42" stroke="#777"/></svg><b>1</b></div>
  </div>
</footer>
</body>
</html>
```
FILE: styles.css
```css
* { box-sizing: border-box; }
body { margin: 0; width: 1920px; height: 1080px; overflow: hidden; position: relative; display: flex; flex-direction: column; font: 12px/16px "Open Sans", "Noto Sans", sans-serif; color: #1c4690; background: #bfdbff; }
p, dl, dd, h2 { margin: 0; }
svg { display: block; flex: none; }
.defs { position: absolute; }
button { font: inherit; padding: 0; margin: 0; display: block; flex: none; }
.mmh-text { font: bold 7px "DejaVu Sans", sans-serif; fill: #00b52f; }
.r-text { font: bold 25px "Liberation Sans", sans-serif; fill: #28289c; }

/* title bar */
.titlebar { height: 29px; flex: none; display: flex; align-items: center; position: relative; background: linear-gradient(#cbdef6, #d4e4f8 50%, #e3eefc); }
.quick { width: 42px; height: 23px; margin: -3px 0 0 42px; padding: 4px 0 0 13px; border: 1px solid #a9c1e2; border-top-color: #d7e5f5; border-left: 0; border-radius: 0 12px 10px 0; background: #d1e0f3; }
.quick-arrow { margin-left: 5px; }
.window-title { position: absolute; left: 0; top: 6px; width: 1956px; text-align: center; color: #6c7684; letter-spacing: -.25px; }
.window-buttons { margin-left: auto; display: flex; gap: 13px; padding-right: 7px; }
.orb { position: absolute; left: 3px; top: 3px; width: 37px; height: 37px; border-radius: 50%; border: 2px solid #8095a8; background: #e2ebf1; padding: 1px; z-index: 3; }
.orb svg { width: 31px; height: 31px; }

/* ribbon tabs */
.tabs { height: 24px; flex: none; display: grid; grid-template-columns: 70px 69px 81px 66px 66px 71px 78px 95px 125px 123px 51px 85px 142px 69px; padding-left: 41px; background: #bfdbff; line-height: 25px; text-align: center; letter-spacing: -.2px; }
.tabs .alex { padding-right: 4px; }
.tabs .active { margin: 0 0 -2px 0; border: 1px solid #8db2e3; border-bottom: 0; border-radius: 4px 4px 0 0; background: linear-gradient(#e6f0fc, #f2f7fe); line-height: 24px; z-index: 2; box-shadow: inset 1px 1px #fff; padding-right: 2px; }

/* ribbon */
.ribbon { height: 103px; flex: none; display: grid; grid-template-columns: 581px 87px 129px 145px 391px 78px 61px 64px 111px 88px 77px 66px; gap: 3px; padding: 2px 0 4px 4px; background: #e4effd; border: 1px solid #8db2e3; border-bottom: 2px solid #8aaddc; border-radius: 4px; }
.group { border: 1px solid #a9c3de; border-radius: 3px; display: flex; flex-direction: column; background: linear-gradient(#dfe9f5, #d3e0f0 16%, #c9d9ed 17%, #dce8f7 80%); letter-spacing: -.27px; min-width: 0; }
.caption { height: 19px; margin-top: auto; background: #c2d9f1; text-align: center; line-height: 18px; white-space: nowrap; }
.tools { display: grid; grid-template-columns: 1fr; padding-top: 5px; }
.tools-mmh { grid-template-columns: 58px 58px 56px 60px 66px 104px 75px 101px; padding-left: 2px; }
.tools-care { grid-template-columns: 57px 62px; padding-left: 2px; }
.tools-shared { grid-template-columns: 86px 84px 118px 98px; padding-left: 3px; }
.tool { display: flex; flex-direction: column; align-items: center; min-width: 0; }
.tool svg { width: 32px; height: 32px; }
.tool svg.wide { width: 36px; }
.tool p { margin-top: 5px; text-align: center; white-space: nowrap; line-height: 16px; }
.tool i, .dock-more i { display: inline-block; width: 0; height: 0; border: 3px solid transparent; border-top: 4px solid #1e3f85; border-bottom: 0; vertical-align: 2px; }
.links { padding: 1px 0 0 6px; letter-spacing: -.35px; }
.links div { height: 24px; display: flex; align-items: center; gap: 8px; }
.links svg { width: 16px; height: 16px; }

/* patient banner */
.banner { height: 48px; flex: none; display: flex; background: #cce0ff; border-left: 2px solid #999; border-right: 1px solid #999; color: #000; white-space: nowrap; font-family: "DejaVu Sans Condensed", "DejaVu Sans", sans-serif; }
.banner > div { display: flex; flex-direction: column; }
.banner strong { font-size: 17px; line-height: 24px; color: #191970; letter-spacing: .08px; }
.banner b { font-size: 11.500px; line-height: 14px; margin-top: 8px; letter-spacing: -.3px; }
.banner-mmh { width: 28px; height: 30px; margin: 4px 0 0 9px; }
.banner-globe { width: 30px; height: 28px; margin: 5px 0 0 7px; }
.b-name { margin-left: 6px; width: 411px; }
.b-code { width: 160px; }
.b-code b { margin-left: -4px; }
.b-code span { margin-left: 16px; }
.b-nhi { width: 123px; }
.b-nhi b { margin-left: 96px; }
.b-sex { width: 137px; }
.b-sex b { margin-left: 33px; }
.b-fund { width: 106px; padding-top: 17px; }
.b-fund em { font: 11.500px/15px "Open Sans", sans-serif; letter-spacing: -.3px; color: #0000f0; }
.b-fund em span { margin-left: 12px; }
.b-fund b { margin-top: 2px; font-size: 13px; letter-spacing: -.2px; }
.b-sri { width: 54px; padding-top: 2px; }
.b-sri b, .b-alert b { margin: 0; }
.b-sri b + b { margin-top: 16px; }
.b-alert { padding-top: 2px; }

/* workspace */
.workspace { height: 814px; flex: none; display: flex; border-left: 2px solid #999; background: #e4ecf6; border-bottom: 1px solid #999; }
.dock { flex: none; display: flex; flex-direction: column; border: 1px solid #6593cf; background: #d5e4f2; }
.dock-left { width: 40px; margin: 0 2px 0 0; }
.dock-head { height: 25px; flex: none; border-bottom: 2px solid #6593cf; background: linear-gradient(#e3efff, #afd2ff); color: #3d69a8; font-size: 17px; line-height: 21px; text-align: center; }
.dock-left .dock-head { padding-left: 16px; }
.dock-right .dock-head { padding-right: 15px; }
.dock-body { flex: 1; display: flex; justify-content: center; align-items: center; color: #0b3468; font: 17px/20px "Open Sans", sans-serif; }
.dock-body span { writing-mode: vertical-rl; transform: rotate(180deg); }
.dock-left .dock-body { padding-right: 2px; }
.dock-right .dock-body { align-items: flex-start; padding-top: 298px; padding-right: 5px; letter-spacing: .1px; }
.grip { height: 7px; flex: none; border: solid #6593cf; border-width: 1px 0; background: repeating-linear-gradient(90deg, #6593cf 0 2px, #e6f0fc 2px 4px) center / 100% 2px no-repeat #e6f0fc; }
.dock-item { height: 40px; flex: none; display: flex; align-items: center; justify-content: center; border-bottom: 1px solid #6593cf; background: linear-gradient(#e3efff, #c6deff 45%, #a9cdfc 50%, #bcd9ff); padding-top: 1px; }
.dock-item.selected { background: linear-gradient(#fdd9a0, #fca84c 45%, #fbb45c 50%, #fee07a); padding-top: 8px; }
.dock-item.low { padding-top: 10px; }
.dock-more { height: 30px; flex: none; display: flex; flex-direction: column; align-items: center; padding: 2px 0 0 21px; background: linear-gradient(#e3efff, #c6deff 45%, #a9cdfc 50%, #bcd9ff); color: #000; font: bold 16px/14px "Open Sans", sans-serif; }
.dock-more i { border-top-color: #000; margin-top: 2px; }
.dock-right { width: 40px; margin: 0 1px 0 auto; }
.dock-right .grip { margin-top: auto; }
.dock-bottom { display: flex; height: 29px; flex: none; }
.dock-mini { width: 20px; background: linear-gradient(#fdd9a0, #fca84c 45%, #fee07a); display: flex; align-items: center; }
.dock-bottom .dock-more { width: 18px; padding-left: 0; }

.document { width: 1833px; flex: none; display: flex; flex-direction: column; border: solid #999; border-width: 1px 2px 0 1px; background: #bfdbff; }
.doc-tabs { height: 24px; flex: none; display: flex; justify-content: space-between; padding: 2px 3px 0 1px; border-bottom: 1px solid #8db2e3; }
.doc-tab { width: 258px; height: 22px; border: 1px solid #8db2e3; border-bottom: 0; border-radius: 3px 3px 0 0; background: linear-gradient(#fff, #dfeafb 30%, #edf4fe); font: bold 12px/22px "Liberation Sans", sans-serif; letter-spacing: -.36px; padding-left: 5px; white-space: nowrap; color: #15398a; }
.doc-close { margin-top: 5px; }
.frame { flex: 1; margin: 1px 0 1px; border: 1px solid #b3bfcd; border-radius: 4px; box-shadow: inset 0 0 0 1px #e9f1fa; display: flex; flex-direction: column; padding: 1px 1px 1px 1px; background: #d8e7f5; min-height: 0; }
.sub-tabs { height: 22px; flex: none; background: #bfdbff; padding: 1px 0 0 3px; border-bottom: 1px solid #8db2e3; }
.sub-tab { width: 39px; height: 20px; border: 1px solid #8db2e3; border-bottom: 0; border-radius: 3px 3px 0 0; background: #eaf2fd; font: bold 12px/21px "Liberation Sans", sans-serif; text-align: center; }
.content { height: 731px; flex: none; background: #e5e5e5; border: 1px solid #8db2e3; border-top: 0; position: relative; padding: 23px 0 0 12px; color: #333; font: 12px/14px "Liberation Sans", sans-serif; }
fieldset { margin: 0; padding: 0; border: 1px solid #d0d0d0; min-width: 0; }
.box { width: 506px; }
.box > legend { margin-left: 5px; padding: 0 0 0 5px; font: bold 15px/18px "Liberation Sans", sans-serif; color: #3498ba; }
.details { height: 160px; }
.details-top { display: flex; padding: 4px 0 0 10px; height: 107px; }
.person { display: grid; grid-template-columns: 78px 172px; grid-auto-rows: 17.800px; line-height: 18px; width: 250px; white-space: nowrap; align-content: start; }
.clinic { display: grid; grid-template-columns: 121px 120px; grid-template-rows: 20px 29px 20px; line-height: 18px; padding-top: 2px; align-content: start; }
.clinic .loc { margin-left: -1px; line-height: 27px; }
.clinic .loc-value { line-height: 13px; padding-top: 1px; }
.clinic .portal { display: flex; gap: 2px; line-height: 24px; }
.ok { width: 14px; height: 14px; }
.clinic .portal .ok { margin-top: 2px; }
.info { width: 16px; height: 16px; }
.btn { height: 28px; border: 1px solid #45a7da; font: 14.200px/26px "Liberation Sans", sans-serif; letter-spacing: -.1px; text-align: center; color: #e2e8ea; }
.blue { width: 170px; background: #6aaec9; }
.green { background: #338a33; }
.orange { background: #e5a535; }
.details-action { display: flex; padding-left: 308px; }
.details-action .info { margin: 9px 0 0 4px; }
.status { height: 196px; margin-top: 27px; }
.status-row { display: flex; padding-left: 8px; }
.status table { width: 293px; height: 105px; margin-top: 33px; border-collapse: collapse; flex: none; align-self: flex-start; table-layout: fixed; }
.status td { border: 1px solid #c8c8c8; padding: 0 0 0 1px; height: 18px; line-height: 14px; white-space: nowrap; }
.status td:first-child { width: 143px; }
.status .tall td { height: 32px; }
.status td .ok { float: left; margin: 1px 2px 0 0; }
.status td.plain { padding-left: 18px; }
.status-side { margin-left: 7px; }
.status-side p { padding-top: 6px; height: 38px; }
.side-action { display: flex; }
.side-action.link .btn { padding-bottom: 2px; line-height: 24px; }
.side-action .info { margin: 3px 0 0 1px; }
.reset { margin-top: 67px; }
.upload { height: 148px; margin-top: 13px; }
.upload > legend { padding-left: 0; line-height: 19px; }
.upload-row { display: flex; padding: 3px 0 0 10px; }
.upload-row > .info { margin: 84px 0 0 21px; }
.inner > legend { font: bold 12px/16px "Liberation Sans", sans-serif; padding: 0; }
.summary { width: 117px; height: 119px; flex: none; }
.summary label { display: flex; height: 19px; padding: 1px 0 0 3px; white-space: nowrap; line-height: 18px; }
.summary legend + label { margin-top: 1px; }
.summary .check { margin: 0 3px 0 0; }
.check { width: 13px; height: 13px; flex: none; border: 1px solid #b2b2b2; background: #d2d2d2; position: relative; }
.check::after { content: ""; position: absolute; left: 3px; top: -1px; width: 5px; height: 9px; border: solid #777; border-width: 0 2px 2px 0; transform: rotate(38deg); }
.radio { width: 13px; height: 13px; flex: none; border: 1px solid #b8b8b8; border-radius: 50%; background: #d6d6d6; }
.radio.on { background: radial-gradient(circle, #777 0 3px, #d6d6d6 3.600px); }
.upload-mid { margin-left: 10px; width: 317px; padding-top: 1px; }
.services { height: 61px; }
.consult { height: 53px; margin-top: 3px; }
.services > legend { margin-left: 1px; }
.opt { display: flex; padding-left: 3px; white-space: nowrap; }
.opt .check { margin-top: 6px; }
.opt-name { width: 79px; padding: 7px 0 0 4px; line-height: 16px; }
.lab .opt-name { padding-left: 7px; width: 80px; }
.date { width: 74px; height: 22px; margin-top: 4px; border: 1px solid #aaa; background: #d2d2d2; color: #777; font: 13.330px/20px "Liberation Sans", sans-serif; text-align: center; }
.cal { width: 26px; height: 20px; margin-top: 1px; }
.opt .radio { margin: 6px 0 0 11px; }
.lab .radio { margin-left: 14px; }
.opt-all { width: 20px; padding: 7px 0 0 6px; line-height: 16px; }
.opt .radio.on { margin-left: 6px; }
.opt-default { padding: 7px 0 0 3px; line-height: 16px; }
.lab .opt-default { padding-left: 6px; }
.recalls { margin-top: -1px; }
.recalls .check { margin-top: 1px; }
.recalls .opt-name { padding-top: 3px; }
.lab { height: 28px; }
.actions { display: flex; padding: 5px 0 0 4px; }
.actions .info { margin: 3px 0 0 3px; }
.actions .info.low { margin: 6px 0 0 0; }
.btn.audit { width: 98px; }
.btn.suspend { width: 166px; margin-left: 48px; }
.btn.close { width: 67px; margin-left: 64px; }
.mark { position: absolute; left: 0; top: 624px; width: 4px; height: 4px; background: linear-gradient(135deg, #666 50%, #c8c8c8 50%); }
.snip { position: absolute; left: 535px; top: 669px; width: 173px; height: 23px; background: #dfe3e8; color: #d0d3d7; text-align: center; line-height: 23px; padding-right: 26px; font-family: "Open Sans", sans-serif; font-size: 11.300px; }
.doc-footer { flex: 1; display: flex; padding: 4px 8px 0 0; justify-content: flex-end; gap: 4px; }
.doc-footer button { width: 73px; height: 22px; border: 1px solid #adadad; background: #e1e1e1; color: #000; font: 11.500px/20px "Open Sans", sans-serif; letter-spacing: -.3px; }
.doc-footer .cancel { margin-left: 78px; }

/* change e-mail dialog */
.dialog { position: absolute; left: 616px; top: 498px; width: 507px; height: 237px; border: 1px solid #a6c9e2; border-radius: 5px; background: #fcfdfd; padding: 3px 2px 3px 3px; font: 13.200px/22px "Liberation Sans", sans-serif; color: #222; z-index: 5; }
.dialog header { height: 40px; border: 1px solid #4297d7; border-radius: 5px; background: #8ab4d9; display: flex; justify-content: space-between; position: relative; overflow: hidden; }
.wave { position: absolute; inset: 0; width: 499px; height: 38px; fill: #6ea5d2; }
.dialog h2 { position: relative; margin: 4px 0 0 13px; font: bold 13.300px/20px "Liberation Sans", sans-serif; color: #fff; }
.dialog-close { position: relative; margin: 14px 10px 0 0; }
.form { display: grid; grid-template-columns: 163px 274px; grid-auto-rows: 21px; gap: 13px 4px; padding-top: 21px; height: 135px; border-bottom: 1px solid #a6c9e2; white-space: nowrap; align-content: start; }
.form > span { text-align: right; }
.form sup { color: #f00; font-size: 11px; line-height: 0; vertical-align: 3px; }
.field { border: 1px solid #6b6b6b; background: #fff; line-height: 19px; padding-left: 2px; font-size: 13.250px; }
.field.disabled { background: #e6e6e6; border-color: #b8b8b8; color: #6d6d6d; }
.dialog footer { display: flex; justify-content: flex-end; gap: 5px; padding: 10px 20px 0 0; }
.dialog footer button { height: 32px; border: 1px solid #b5d2e6; border-radius: 5px; color: #fff; font: bold 13.300px/29px "Liberation Sans", sans-serif; }
.dialog .ok-btn { width: 115px; background: #008000; }
.dialog .cancel-btn { width: 72px; background: #ffa500; }

.watermark { position: absolute; left: 1599px; top: 945px; z-index: 4; color: #adb0b3; white-space: nowrap; }
.watermark p { font-size: 19.200px; line-height: 26px; letter-spacing: -.02px; }
.watermark small { display: block; font-size: 14.500px; line-height: 20px; letter-spacing: -.07px; }

/* status bar */
.statusbar { height: 22px; flex: none; display: grid; grid-template-columns: 960px 25px 25px 101px 389px 200px 1fr; gap: 1px; padding: 3px 1px 0 0; background: #dfebfb; border-top: 1px solid #6c97cf; color: #1b1b7c; letter-spacing: 0; }
.statusbar div { border: 1px solid #93bdf5; border-bottom: 0; background: linear-gradient(#d3e4fb, #c3dafa 40%, #aaccfb 45%, #bfdaff); line-height: 18px; padding-left: 3px; white-space: nowrap; min-width: 0; }
.statusbar div:first-child { padding-left: 2px; letter-spacing: -.3px; }
.statusbar .site { letter-spacing: .07px; }
.statusbar .warn { padding: 2px 0 0 4px; }

/* taskbar */
.taskbar { height: 40px; flex: none; display: flex; background: linear-gradient(90deg, #011a22, #01131c 50%, #000715); color: #fff; }
.start { width: 48px; padding: 12px 16px; }
.search { width: 344px; display: flex; align-items: center; gap: 10px; padding-left: 12px; background: #f2f2f2; border: 1px solid #bfbfbf; color: #2b2b2b; font-size: 14.800px; letter-spacing: -.15px; }
.app { width: 49px; display: flex; align-items: center; justify-content: center; position: relative; }
.app.view { margin-right: 1px; }
.app.open { background: linear-gradient(#76b9ed, #76b9ed) center bottom / 40px 2px no-repeat; }
.app.current { background: linear-gradient(#76b9ed, #76b9ed) center bottom / 100% 2px no-repeat #33474e; }
.tray { margin-left: auto; display: flex; align-items: center; padding-right: 17px; }
.tray svg { margin-right: 8px; }
.tray .lang { margin-left: 5px; width: 36px; letter-spacing: -.3px; }
.clock { display: flex; flex-direction: column; text-align: center; width: 58px; line-height: 17px; margin-top: -3px; letter-spacing: -.4px; }
.notice { width: 25px; height: 25px; margin-left: 18px; position: relative; }
.notice b { position: absolute; left: 13px; top: 8px; font: 12px/16px "Open Sans", sans-serif; }
```
